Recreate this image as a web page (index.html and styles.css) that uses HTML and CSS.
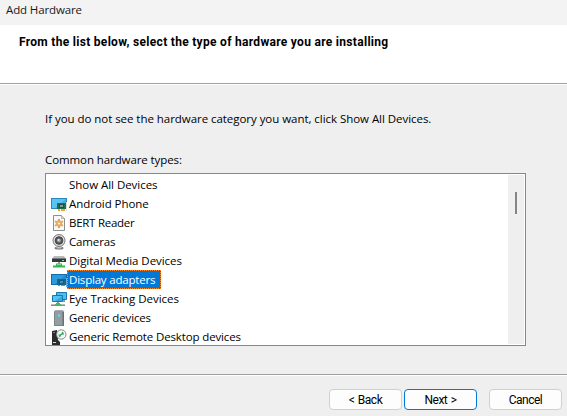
FILE: index.html
```html
<!DOCTYPE html>
<html lang="en">
<head>
<meta charset="utf-8">
<title>Add Hardware</title>
<link rel="stylesheet" href="styles.css">
</head>
<body>
<div class="window">
  <header class="titlebar"><span>Add Hardware</span></header>
  <div class="heading"><h1>From the list below, select the type of hardware you are installing</h1></div>
  <main class="content">
    <p class="hint"><span>If you do not see the hardware category you want, click Show All Devices.</span></p>
    <p class="caption"><span>Common hardware types:</span></p>
    <div class="listbox">
      <ul class="items">
        <li class="wide"><i class="icon"></i><span class="label">Show All Devices</span></li>
        <li class="wide"><svg class="icon" viewBox="0 0 16 16"><path fill="#2f84b8" d="M0 2h16v11H0z"/><path fill="#58c4f3" d="M1 3h14v9H1z"/><path fill="#43aee2" d="M15 3v9H4z"/><path fill="#1e6e50" d="M6 7h9v6H6z"/><path fill="#34464b" d="M8 8h5v4H8z"/><path fill="#72aa91" d="M9 9h3v2H9z"/><path fill="#d7dddd" d="M15 6h1v9h-1z"/><path fill="#f3a62b" d="M7 13h2v2H7zM10 13h4v2h-4z"/></svg><span class="label">Android Phone</span></li>
        <li class="tight"><svg class="icon" viewBox="0 0 16 16"><path fill="#f8f8f8" stroke="#8e8e8e" d="M2.500.5h8l3 3v12h-11z"/><path fill="#ddd" stroke="#999" stroke-width=".7" d="M10.500.5v3h3"/><g stroke="#df9d4c" stroke-width="2"><path d="M8 4v9M4.100 6.250l7.800 4.500M4.100 10.750l7.800-4.500"/></g><circle cx="8" cy="8.500" r="3.200" fill="#e6ad66"/><circle cx="8" cy="8.500" r="1.100" fill="#fff0d5"/></svg><span class="label">BERT Reader</span></li>
        <li><svg class="icon" viewBox="0 0 16 16"><ellipse cx="8" cy="14" rx="4.500" ry="1.600" fill="#777"/><ellipse cx="8" cy="13.700" rx="3" ry=".7" fill="#ccc"/><circle cx="8" cy="6.500" r="6" fill="#ddd" stroke="#777"/><circle cx="8" cy="6.500" r="3.800" fill="#55595a" stroke="#404344"/><circle cx="8" cy="6.500" r="2" fill="#999"/><circle cx="7.500" cy="6" r="1" fill="#e5eeee"/></svg><span class="label">Cameras</span></li>
        <li class="wide"><svg class="icon" viewBox="0 0 16 16"><path fill="#b9bcbc" d="M3 3h10l2 3H1z"/><path fill="#34383a" d="M1 5.500h14V9H1z"/><path fill="#7ee08f" d="M11 7h2v1h-2z"/><path fill="#9ba4a2" d="M7 9h2v2H7z"/><path fill="#38b456" d="M5 10.500h6v2h3v2H2v-2h3z"/><path fill="#7dde8c" d="M6 11h4v1H6z"/></svg><span class="label">Digital Media Devices</span></li>
        <li class="selected"><svg class="icon" viewBox="0 0 16 16"><path fill="#176ca8" d="M0 2h16v11H0z"/><path fill="#2c9bdc" d="M1 3h14v9H1z"/><path fill="#198bd0" d="M15 3v9H4z"/><path fill="#13688c" d="M6 7h9v6H6z"/><path fill="#1c578c" d="M8 8h5v4H8z"/><path fill="#3d91b7" d="M9 9h3v2H9z"/><path fill="#67a9d9" d="M15 6h1v9h-1z"/><path fill="#7e9293" d="M7 13h2v1H7zM10 13h4v1h-4z"/></svg><span class="label">Display adapters</span></li>
        <li class="wide"><svg class="icon" viewBox="0 0 16 16"><path fill="#47bfef" stroke="#1978ae" d="M5.500 1.500h10v7h-10z"/><path fill="#52c5f2" stroke="#1978ae" d="M1.500 4.500h10v6h-10z"/><path fill="#35a7df" d="M11 5v5H4z"/><path fill="#929b9c" d="M6 11h2v2H6zM12 9h2v2h-2z"/><path fill="#42b95a" d="M5 12h4v1h5v2H0v-2h5z"/><path fill="#b5bcbb" d="M0 13h4v1H0zM10 13h4v1h-4z"/></svg><span class="label">Eye Tracking Devices</span></li>
        <li><svg class="icon" viewBox="0 0 16 16"><path fill="#a7adb0" d="M4 0h8l1 2H3z"/><path fill="#7c858a" d="M3 1.500h10V16H3z"/><path fill="#949da1" d="M4 2h7v13H4z"/><path fill="#666f74" d="M12 2h1v14h-1z"/><circle cx="8" cy="5.500" r="1.200" fill="#5bdcf0"/></svg><span class="label">Generic devices</span></li>
        <li><svg class="icon" viewBox="0 0 16 16"><path fill="#292d2e" d="M1 2l5-1 1 10 2 2v3H1z"/><path fill="#777" d="M2 3h2v1H2z"/><path fill="#ddd" d="M2 13h3v1H2z"/><circle cx="10.300" cy="5.500" r="4.700" fill="#f4f5f4" stroke="#858b89"/><path fill="none" stroke="#239d50" stroke-width="1.200" d="M7.500 6h2l-1 2M13 5h-2l1-2M9.500 6l1.500-1"/></svg><span class="label">Generic Remote Desktop devices</span></li>
      </ul>
      <div class="scrollbar"><div class="thumb"></div></div>
    </div>
  </main>
  <footer class="actions">
    <button>&lt; Back</button><button class="primary">Next &gt;</button><button class="cancel">Cancel</button>
  </footer>
</div>
</body>
</html>
```
FILE: styles.css
```css
* { box-sizing: border-box; }
body { margin: 0; background: #efefef; color: #000; font: 11.5px/17px "Open Sans", "Noto Sans", sans-serif; overflow: hidden; }
p, h1, ul { margin: 0; padding: 0; }
.window { width: 567px; height: 416px; display: flex; flex-direction: column; }
.titlebar { height: 25px; background: #f3f3f3; padding: 1px 0 0 6px; color: #191919; letter-spacing: -.13px; }
.heading { height: 59px; background: #fff; border-bottom: 1px solid #a0a0a0; padding: 9px 0 0 19px; }
h1 { font: bold 12px/16px Roboto, sans-serif; letter-spacing: .3px; white-space: nowrap; }
.content { height: 290px; border-top: 1px solid #fff; padding: 25px 41px 0 45px; white-space: nowrap; }
.hint { height: 41px; letter-spacing: -.045px; }
.caption { height: 22px; letter-spacing: -.09px; }
.listbox { width: 481px; height: 173px; border: 1px solid #828790; background: #fff; padding: 1px; display: flex; justify-content: space-between; }
.items { list-style: none; height: 171px; overflow: hidden; padding-left: 4px; }
.items li { height: 19px; display: flex; align-items: center; letter-spacing: -.14px; }
.items .wide { letter-spacing: -.04px; }
.items .tight { letter-spacing: -.27px; }
.icon { width: 16px; height: 16px; flex: none; }
.label { height: 19px; line-height: 19px; padding: 0 6px 0 2px; }
.items .selected { letter-spacing: -.2px; }
.selected .label { width: 94px; background: #0078d7; color: #fff; outline: 1px dotted #ff8728; outline-offset: -1px; }
.scrollbar { width: 16px; background: #efefef; padding: 17px 0 0 7px; }
.thumb { width: 2px; height: 22px; background: #858585; }
.actions { height: 42px; border-top: 1px solid #a0a0a0; box-shadow: inset 0 1px #fff; padding: 14px 5px 0 0; display: flex; justify-content: flex-end; gap: 2px; }
button { width: 73px; height: 21px; border: 1px solid #d0d0d0; border-radius: 4px; background: #fdfdfd; color: #000; padding: 0; font: 12px/18px Roboto, sans-serif; letter-spacing: -.5px; word-spacing: 1px; }
.primary { border-color: #0078d4; }
.cancel { margin-left: 10px; }
```
